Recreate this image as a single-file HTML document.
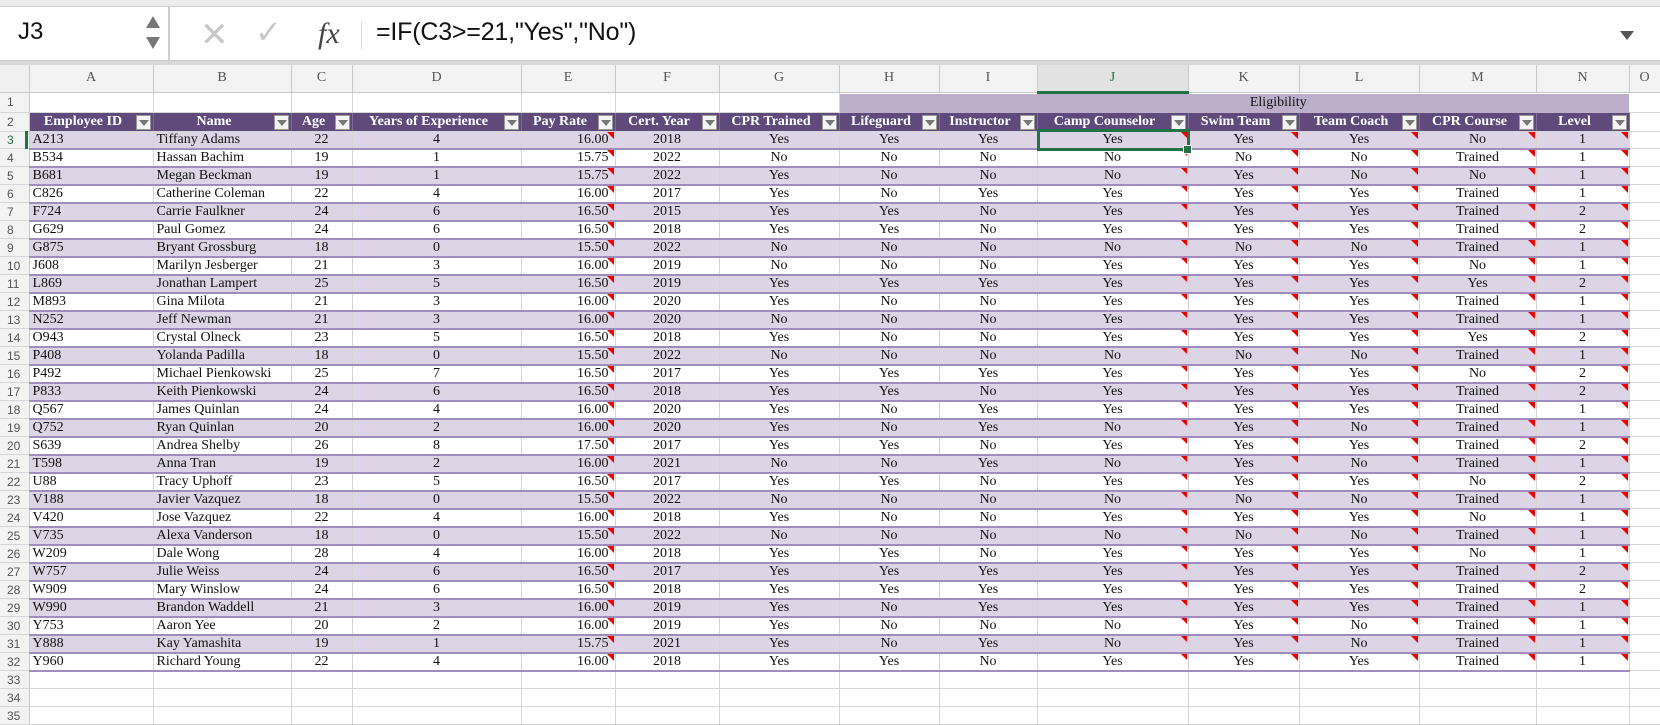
<!DOCTYPE html>
<html><head><meta charset="utf-8"><style>
*{box-sizing:border-box;margin:0;padding:0}
body{width:1660px;height:720px;overflow:hidden;background:#fff;position:relative;font-family:"Liberation Serif",serif}
#top{position:absolute;left:0;top:0;width:1660px;height:7px;background:#ececec;border-bottom:1px solid #d0d0d0}
#fb{position:absolute;left:0;top:7px;width:1660px;height:54px;background:#fff;border-bottom:1px solid #c8c8c8}
#nb{position:absolute;left:0;top:0;width:170px;height:54px;border-right:2px solid #cfcfcf;font-family:"Liberation Sans",sans-serif;font-size:24px;padding:11px 0 0 18px;color:#111}
.arr{position:absolute;left:146px;width:0;height:0;border-left:7px solid transparent;border-right:7px solid transparent}
#gap{position:absolute;left:0;top:61px;width:1660px;height:4px;background:#d8d8d8}
#fx{position:absolute;left:318px;top:10px;font-family:"Liberation Serif",serif;font-style:italic;font-size:30px;color:#444}
#sep{position:absolute;left:361px;top:14px;width:1px;height:28px;background:#ddd}
#ft{position:absolute;left:376px;top:11px;font-family:"Liberation Sans",sans-serif;font-size:25px;color:#111;letter-spacing:-0.2px}
table{position:absolute;left:0;top:65px;border-collapse:collapse;table-layout:fixed;width:1660px}
td,th{height:18px;border-right:1px solid #d6d6d6;border-bottom:1px solid #d6d6d6;font-size:14px;line-height:16px;white-space:nowrap;overflow:hidden;text-align:center;padding:0 2px;position:relative;color:#111}
th{background:#f3f3f3;font-family:"Liberation Sans",sans-serif;font-weight:normal;font-size:12px;color:#555;text-align:left;padding-left:7px;border-right:1px solid #c9c9c9}
tr.ch th{text-align:center;padding:0;font-family:"Liberation Serif",serif;font-size:14px;height:27px;background:#f3f3f3;border-bottom:1px solid #c9c9c9;color:#555}
tr.ch th.cj{background:#e2e2e2;color:#217346;border-bottom:3px solid #217346}
tr.ch th.c0{background:#f0f0f0}
tr.r1 td{height:20px}
tr.r2 td{height:19px}
td.el{background:#bdaecb;border-right:none;border-bottom:1px solid #bdaecb}
tr.h td{background:#5f4a7b;color:#fff;font-weight:bold;font-size:14px;border-right:1px solid #7d6a96;text-align:center;padding-right:18px}
tr.h td:last-child{background:#fff;border-right:1px solid #d6d6d6}
.fb{position:absolute;right:2px;top:2px;width:15px;height:15px;background:#f4f4f4;border:1px solid #999}
.fb:after{content:"";position:absolute;left:2px;top:4px;border-left:5px solid transparent;border-right:5px solid transparent;border-top:6px solid #777}
tr.d td,tr.d th{height:17px}
tr.d td{border-bottom:2px solid #a18dbd}
tr.d td:last-child{border-bottom:1px solid #d6d6d6;background:#fff}
tr.s td{background:#ddd5e6}
tr.d td:nth-child(2),tr.d td:nth-child(3){text-align:left;padding-left:3px}
tr.d td:nth-child(6){text-align:right;padding-right:6px}
tr.d td:nth-child(6):after,tr.d td:nth-child(11):after,tr.d td:nth-child(12):after,tr.d td:nth-child(13):after,tr.d td:nth-child(14):after,tr.d td:nth-child(15):after{content:"";position:absolute;right:1px;top:0;border-left:7px solid transparent;border-top:7px solid #e00}
tr.d td:nth-child(11):after{border-left-width:6px;border-top-width:6px}
#sel{position:absolute;left:1037px;top:129px;width:153px;height:22px;border:3px solid #217346}
#hd{position:absolute;left:1183px;top:145px;width:9px;height:9px;background:#217346;border:1px solid #fff}
#rb{position:absolute;left:25px;top:131px;width:3px;height:18px;background:#217346}
</style></head><body>
<div id="top"></div>
<div id="fb">
<div id="nb">J3<div class="arr" style="top:9px;border-bottom:12px solid #777"></div><div class="arr" style="top:30px;border-top:12px solid #777"></div></div>
<div style="position:absolute;left:200px;top:8px;font-family:'Liberation Sans',sans-serif;font-size:34px;color:#c8c8c8;">✕</div>
<div style="position:absolute;left:255px;top:6px;font-family:'DejaVu Sans',sans-serif;font-size:32px;color:#c8c8c8;">✓</div>
<div id="fx">fx</div><div id="sep"></div>
<div id="ft">=IF(C3&gt;=21,"Yes","No")</div>
<div style="position:absolute;left:1620px;top:24px;border-left:7px solid transparent;border-right:7px solid transparent;border-top:9px solid #555"></div>
</div>
<div id="gap"></div>
<table>
<colgroup><col style="width:29px"><col style="width:124px"><col style="width:138px"><col style="width:61px"><col style="width:169px"><col style="width:94px"><col style="width:104px"><col style="width:120px"><col style="width:100px"><col style="width:98px"><col style="width:151px"><col style="width:111px"><col style="width:120px"><col style="width:117px"><col style="width:93px"><col style="width:31px"></colgroup>
<tr class="ch"><th class="c0"></th><th>A</th><th>B</th><th>C</th><th>D</th><th>E</th><th>F</th><th>G</th><th>H</th><th>I</th><th class="cj">J</th><th>K</th><th>L</th><th>M</th><th>N</th><th>O</th></tr>
<tr class="r1"><th>1</th><td></td><td></td><td></td><td></td><td></td><td></td><td></td><td class="el" colspan="7" style="text-align:center;padding-left:90px">Eligibility</td><td></td></tr>
<tr class="h r2"><th>2</th><td>Employee ID<span class="fb"></span></td><td>Name<span class="fb"></span></td><td>Age<span class="fb"></span></td><td>Years of Experience<span class="fb"></span></td><td>Pay Rate<span class="fb"></span></td><td>Cert. Year<span class="fb"></span></td><td>CPR Trained<span class="fb"></span></td><td>Lifeguard<span class="fb"></span></td><td>Instructor<span class="fb"></span></td><td>Camp Counselor<span class="fb"></span></td><td>Swim Team<span class="fb"></span></td><td>Team Coach<span class="fb"></span></td><td>CPR Course<span class="fb"></span></td><td>Level<span class="fb"></span></td><td></td></tr>
<tr class="d s"><th style="color:#217346">3</th><td>A213</td><td>Tiffany Adams</td><td>22</td><td>4</td><td>16.00</td><td>2018</td><td>Yes</td><td>Yes</td><td>Yes</td><td>Yes</td><td>Yes</td><td>Yes</td><td>No</td><td>1</td><td></td></tr>
<tr class="d"><th>4</th><td>B534</td><td>Hassan Bachim</td><td>19</td><td>1</td><td>15.75</td><td>2022</td><td>No</td><td>No</td><td>No</td><td>No</td><td>No</td><td>No</td><td>Trained</td><td>1</td><td></td></tr>
<tr class="d s"><th>5</th><td>B681</td><td>Megan Beckman</td><td>19</td><td>1</td><td>15.75</td><td>2022</td><td>Yes</td><td>No</td><td>No</td><td>No</td><td>Yes</td><td>No</td><td>No</td><td>1</td><td></td></tr>
<tr class="d"><th>6</th><td>C826</td><td>Catherine Coleman</td><td>22</td><td>4</td><td>16.00</td><td>2017</td><td>Yes</td><td>No</td><td>Yes</td><td>Yes</td><td>Yes</td><td>Yes</td><td>Trained</td><td>1</td><td></td></tr>
<tr class="d s"><th>7</th><td>F724</td><td>Carrie Faulkner</td><td>24</td><td>6</td><td>16.50</td><td>2015</td><td>Yes</td><td>Yes</td><td>No</td><td>Yes</td><td>Yes</td><td>Yes</td><td>Trained</td><td>2</td><td></td></tr>
<tr class="d"><th>8</th><td>G629</td><td>Paul Gomez</td><td>24</td><td>6</td><td>16.50</td><td>2018</td><td>Yes</td><td>Yes</td><td>No</td><td>Yes</td><td>Yes</td><td>Yes</td><td>Trained</td><td>2</td><td></td></tr>
<tr class="d s"><th>9</th><td>G875</td><td>Bryant Grossburg</td><td>18</td><td>0</td><td>15.50</td><td>2022</td><td>No</td><td>No</td><td>No</td><td>No</td><td>No</td><td>No</td><td>Trained</td><td>1</td><td></td></tr>
<tr class="d"><th>10</th><td>J608</td><td>Marilyn Jesberger</td><td>21</td><td>3</td><td>16.00</td><td>2019</td><td>No</td><td>No</td><td>No</td><td>Yes</td><td>Yes</td><td>Yes</td><td>No</td><td>1</td><td></td></tr>
<tr class="d s"><th>11</th><td>L869</td><td>Jonathan Lampert</td><td>25</td><td>5</td><td>16.50</td><td>2019</td><td>Yes</td><td>Yes</td><td>Yes</td><td>Yes</td><td>Yes</td><td>Yes</td><td>Yes</td><td>2</td><td></td></tr>
<tr class="d"><th>12</th><td>M893</td><td>Gina Milota</td><td>21</td><td>3</td><td>16.00</td><td>2020</td><td>Yes</td><td>No</td><td>No</td><td>Yes</td><td>Yes</td><td>Yes</td><td>Trained</td><td>1</td><td></td></tr>
<tr class="d s"><th>13</th><td>N252</td><td>Jeff Newman</td><td>21</td><td>3</td><td>16.00</td><td>2020</td><td>No</td><td>No</td><td>No</td><td>Yes</td><td>Yes</td><td>Yes</td><td>Trained</td><td>1</td><td></td></tr>
<tr class="d"><th>14</th><td>O943</td><td>Crystal Olneck</td><td>23</td><td>5</td><td>16.50</td><td>2018</td><td>Yes</td><td>No</td><td>No</td><td>Yes</td><td>Yes</td><td>Yes</td><td>Yes</td><td>2</td><td></td></tr>
<tr class="d s"><th>15</th><td>P408</td><td>Yolanda Padilla</td><td>18</td><td>0</td><td>15.50</td><td>2022</td><td>No</td><td>No</td><td>No</td><td>No</td><td>No</td><td>No</td><td>Trained</td><td>1</td><td></td></tr>
<tr class="d"><th>16</th><td>P492</td><td>Michael Pienkowski</td><td>25</td><td>7</td><td>16.50</td><td>2017</td><td>Yes</td><td>Yes</td><td>Yes</td><td>Yes</td><td>Yes</td><td>Yes</td><td>No</td><td>2</td><td></td></tr>
<tr class="d s"><th>17</th><td>P833</td><td>Keith Pienkowski</td><td>24</td><td>6</td><td>16.50</td><td>2018</td><td>Yes</td><td>Yes</td><td>No</td><td>Yes</td><td>Yes</td><td>Yes</td><td>Trained</td><td>2</td><td></td></tr>
<tr class="d"><th>18</th><td>Q567</td><td>James Quinlan</td><td>24</td><td>4</td><td>16.00</td><td>2020</td><td>Yes</td><td>No</td><td>Yes</td><td>Yes</td><td>Yes</td><td>Yes</td><td>Trained</td><td>1</td><td></td></tr>
<tr class="d s"><th>19</th><td>Q752</td><td>Ryan Quinlan</td><td>20</td><td>2</td><td>16.00</td><td>2020</td><td>Yes</td><td>No</td><td>Yes</td><td>No</td><td>Yes</td><td>No</td><td>Trained</td><td>1</td><td></td></tr>
<tr class="d"><th>20</th><td>S639</td><td>Andrea Shelby</td><td>26</td><td>8</td><td>17.50</td><td>2017</td><td>Yes</td><td>Yes</td><td>No</td><td>Yes</td><td>Yes</td><td>Yes</td><td>Trained</td><td>2</td><td></td></tr>
<tr class="d s"><th>21</th><td>T598</td><td>Anna Tran</td><td>19</td><td>2</td><td>16.00</td><td>2021</td><td>No</td><td>No</td><td>Yes</td><td>No</td><td>Yes</td><td>No</td><td>Trained</td><td>1</td><td></td></tr>
<tr class="d"><th>22</th><td>U88</td><td>Tracy Uphoff</td><td>23</td><td>5</td><td>16.50</td><td>2017</td><td>Yes</td><td>Yes</td><td>No</td><td>Yes</td><td>Yes</td><td>Yes</td><td>No</td><td>2</td><td></td></tr>
<tr class="d s"><th>23</th><td>V188</td><td>Javier Vazquez</td><td>18</td><td>0</td><td>15.50</td><td>2022</td><td>No</td><td>No</td><td>No</td><td>No</td><td>No</td><td>No</td><td>Trained</td><td>1</td><td></td></tr>
<tr class="d"><th>24</th><td>V420</td><td>Jose Vazquez</td><td>22</td><td>4</td><td>16.00</td><td>2018</td><td>Yes</td><td>No</td><td>No</td><td>Yes</td><td>Yes</td><td>Yes</td><td>No</td><td>1</td><td></td></tr>
<tr class="d s"><th>25</th><td>V735</td><td>Alexa Vanderson</td><td>18</td><td>0</td><td>15.50</td><td>2022</td><td>No</td><td>No</td><td>No</td><td>No</td><td>No</td><td>No</td><td>Trained</td><td>1</td><td></td></tr>
<tr class="d"><th>26</th><td>W209</td><td>Dale Wong</td><td>28</td><td>4</td><td>16.00</td><td>2018</td><td>Yes</td><td>Yes</td><td>No</td><td>Yes</td><td>Yes</td><td>Yes</td><td>No</td><td>1</td><td></td></tr>
<tr class="d s"><th>27</th><td>W757</td><td>Julie Weiss</td><td>24</td><td>6</td><td>16.50</td><td>2017</td><td>Yes</td><td>Yes</td><td>Yes</td><td>Yes</td><td>Yes</td><td>Yes</td><td>Trained</td><td>2</td><td></td></tr>
<tr class="d"><th>28</th><td>W909</td><td>Mary Winslow</td><td>24</td><td>6</td><td>16.50</td><td>2018</td><td>Yes</td><td>Yes</td><td>Yes</td><td>Yes</td><td>Yes</td><td>Yes</td><td>Trained</td><td>2</td><td></td></tr>
<tr class="d s"><th>29</th><td>W990</td><td>Brandon Waddell</td><td>21</td><td>3</td><td>16.00</td><td>2019</td><td>Yes</td><td>No</td><td>Yes</td><td>Yes</td><td>Yes</td><td>Yes</td><td>Trained</td><td>1</td><td></td></tr>
<tr class="d"><th>30</th><td>Y753</td><td>Aaron Yee</td><td>20</td><td>2</td><td>16.00</td><td>2019</td><td>Yes</td><td>No</td><td>No</td><td>No</td><td>Yes</td><td>No</td><td>Trained</td><td>1</td><td></td></tr>
<tr class="d s"><th>31</th><td>Y888</td><td>Kay Yamashita</td><td>19</td><td>1</td><td>15.75</td><td>2021</td><td>Yes</td><td>No</td><td>Yes</td><td>No</td><td>Yes</td><td>No</td><td>Trained</td><td>1</td><td></td></tr>
<tr class="d"><th>32</th><td>Y960</td><td>Richard Young</td><td>22</td><td>4</td><td>16.00</td><td>2018</td><td>Yes</td><td>Yes</td><td>No</td><td>Yes</td><td>Yes</td><td>Yes</td><td>Trained</td><td>1</td><td></td></tr>
<tr><th>33</th><td></td><td></td><td></td><td></td><td></td><td></td><td></td><td></td><td></td><td></td><td></td><td></td><td></td><td></td><td></td></tr>
<tr><th>34</th><td></td><td></td><td></td><td></td><td></td><td></td><td></td><td></td><td></td><td></td><td></td><td></td><td></td><td></td><td></td></tr>
<tr><th>35</th><td></td><td></td><td></td><td></td><td></td><td></td><td></td><td></td><td></td><td></td><td></td><td></td><td></td><td></td><td></td></tr>
</table>
<div id="rb"></div>
<div id="sel"></div>
<div id="hd"></div>
</body></html>
